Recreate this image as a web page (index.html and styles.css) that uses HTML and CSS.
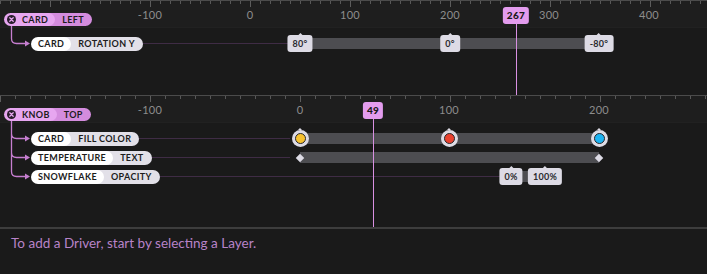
FILE: index.html
```html
<!DOCTYPE html>
<html lang="en">
<head>
    <meta charset="UTF-8">
    <title>Drivers</title>
    <link rel="stylesheet" href="styles.css">
</head>
<body>
    <!-- Driver: Card / Left -->
    <div class="panel panel-card">
        <div class="ruler ruler-wide">
            <div class="chip chip-driver">
                <span class="chip-layer">
                    <svg class="chip-x" width="9" height="9" viewBox="0 0 9 9">
                        <circle cx="4.5" cy="4.5" r="4.5" fill="#2a1d2d"/>
                        <path d="M2.8 2.8 L6.2 6.2 M6.2 2.8 L2.8 6.2" stroke="#e7a6f0" stroke-width="1.3" stroke-linecap="round"/>
                    </svg>
                    CARD
                </span>
                <span class="chip-prop">LEFT</span>
            </div>
            <span class="tick" style="left:150px">-100</span>
            <span class="tick" style="left:250px">0</span>
            <span class="tick" style="left:350px">100</span>
            <span class="tick" style="left:450px">200</span>
            <span class="tick" style="left:549px">300</span>
            <span class="tick" style="left:649px">400</span>
        </div>
        <div class="rows">
            <div class="row">
                <div class="row-line" style="width:250px"></div>
                <div class="chip"><span class="chip-layer">CARD</span><span class="chip-prop">ROTATION Y</span></div>
                <div class="bar" style="left:300px; width:299px"></div>
                <span class="key-label" style="left:300px">80°</span>
                <span class="key-label" style="left:450px">0°</span>
                <span class="key-label" style="left:599px">-80°</span>
            </div>
        </div>
        <svg class="links" width="40" height="94" viewBox="0 0 40 94">
            <path d="M11.5 20 V37.5 Q11.5 42.5 16.5 42.5 H26" fill="none" stroke="#c67ed0" stroke-width="1.3"/>
            <path d="M25 39.5 L30 42.5 L25 45.5 Z" fill="#c67ed0"/>
        </svg>
        <div class="playhead" style="left:516px"><span class="playhead-value">267</span></div>
    </div>

    <!-- Driver: Knob / Top -->
    <div class="panel panel-knob">
        <div class="ruler ruler-narrow">
            <div class="chip chip-driver">
                <span class="chip-layer">
                    <svg class="chip-x" width="9" height="9" viewBox="0 0 9 9">
                        <circle cx="4.5" cy="4.5" r="4.5" fill="#2a1d2d"/>
                        <path d="M2.8 2.8 L6.2 6.2 M6.2 2.8 L2.8 6.2" stroke="#e7a6f0" stroke-width="1.3" stroke-linecap="round"/>
                    </svg>
                    KNOB
                </span>
                <span class="chip-prop">TOP</span>
            </div>
            <span class="tick" style="left:150px">-100</span>
            <span class="tick" style="left:300px">0</span>
            <span class="tick" style="left:449px">100</span>
            <span class="tick" style="left:599px">200</span>
        </div>
        <div class="rows">
            <div class="row">
                <div class="row-line" style="width:250px"></div>
                <div class="chip"><span class="chip-layer">CARD</span><span class="chip-prop">FILL COLOR</span></div>
                <div class="bar" style="left:300px; width:299px"></div>
                <span class="key-dot" style="left:300px"><span class="dot dot-yellow"></span></span>
                <span class="key-dot" style="left:449px"><span class="dot dot-red"></span></span>
                <span class="key-dot" style="left:599px"><span class="dot dot-blue"></span></span>
            </div>
            <div class="row">
                <div class="row-line" style="width:250px"></div>
                <div class="chip"><span class="chip-layer">TEMPERATURE</span><span class="chip-prop">TEXT</span></div>
                <div class="bar" style="left:300px; width:299px"></div>
                <span class="key-diamond" style="left:300px"></span>
                <span class="key-diamond" style="left:599px"></span>
            </div>
            <div class="row">
                <div class="row-line" style="width:461px"></div>
                <div class="chip"><span class="chip-layer">SNOWFLAKE</span><span class="chip-prop">OPACITY</span></div>
                <div class="bar" style="left:511px; width:34px"></div>
                <span class="key-label" style="left:511px">0%</span>
                <span class="key-label" style="left:545px">100%</span>
            </div>
        </div>
        <svg class="links" width="40" height="131" viewBox="0 0 40 131">
            <path d="M11.5 20 V75.5 Q11.5 80.5 16.5 80.5 H26 M11.5 37.5 Q11.5 42.5 16.5 42.5 H26 M11.5 56.5 Q11.5 61.5 16.5 61.5 H26" fill="none" stroke="#c67ed0" stroke-width="1.3"/>
            <path d="M25 39.5 L30 42.5 L25 45.5 Z M25 58.5 L30 61.5 L25 64.5 Z M25 77.5 L30 80.5 L25 83.5 Z" fill="#c67ed0"/>
        </svg>
        <div class="playhead" style="left:373px"><span class="playhead-value">49</span></div>
    </div>

    <div class="footer">To add a Driver, start by selecting a Layer.</div>
</body>
</html>
```

FILE: styles.css
```css
* {
    box-sizing: border-box;
}

body {
    margin: 0;
    width: 707px;
    height: 274px;
    overflow: hidden;
    background-color: #1a1a1a;
    font-family: 'Lato', 'Noto Sans', sans-serif;
}

.panel {
    position: relative;
    border-top: 1px solid #4b4b4b;
    overflow: hidden;
}

.panel-card {
    height: 95px;
}

.panel-knob {
    height: 132px;
}

/* Ruler along the top of each panel */
.ruler {
    position: relative;
    height: 27px;
    padding: 7px 0 0 4px;
    background-color: #1e1e1e;
    border-bottom: 1px solid #212121;
}

.ruler::before {
    content: "";
    position: absolute;
    top: 0;
    left: 0;
    right: 0;
    height: 6px;
}

.ruler-wide::before {
    background:
        repeating-linear-gradient(to right, #5c5c5c 0 1px, transparent 1px 100px) 50px 0 / 100% 6px no-repeat,
        repeating-linear-gradient(to right, #575757 0 1px, transparent 1px 10px) 0 0 / 100% 3px no-repeat;
}

.ruler-narrow::before {
    background:
        repeating-linear-gradient(to right, #5c5c5c 0 1px, transparent 1px 150px) 0 0 / 100% 6px no-repeat,
        repeating-linear-gradient(to right, #575757 0 1px, transparent 1px 15px) 0 0 / 100% 3px no-repeat;
}

.tick {
    position: absolute;
    top: 7px;
    transform: translateX(-50%);
    font-size: 11px;
    line-height: 13px;
    color: #8d8d8d;
    letter-spacing: 0.3px;
}

/* Layer / property chips */
.chip {
    position: relative;
    z-index: 2;
    display: inline-flex;
    height: 14px;
    font-size: 9px;
    font-weight: 700;
    letter-spacing: 0.35px;
    line-height: 14px;
    color: #1c1c1c;
}

.chip-layer {
    position: relative;
    z-index: 1;
    display: flex;
    align-items: center;
    padding: 0 7px;
    border-radius: 7px;
    background-color: #fff;
}

.chip-prop {
    margin-left: -7px;
    padding: 0 8px 0 14px;
    border-radius: 0 7px 7px 0;
    background-color: #e2e0e8;
}

.chip-driver {
    height: 13px;
    line-height: 13px;
}

.chip-driver .chip-layer {
    padding-left: 3px;
    background-color: #e7a6f0;
}

.chip-driver .chip-prop {
    background-color: #d48cde;
}

.chip-x {
    margin-right: 6px;
}

/* Rows */
.rows {
    padding-top: 6px;
}

.row {
    position: relative;
    display: flex;
    align-items: center;
    height: 19px;
    padding-left: 31px;
}

.row-line {
    position: absolute;
    top: 9px;
    left: 40px;
    height: 1px;
    background-color: #3f2c45;
}

.bar {
    position: absolute;
    top: 4px;
    height: 11px;
    background-color: #4d4d51;
}

.key-label {
    position: absolute;
    top: 1px;
    z-index: 2;
    height: 17px;
    padding: 0 5px;
    transform: translateX(-50%);
    border-radius: 3px;
    background-color: #dddbe5;
    font-size: 9px;
    font-weight: 700;
    line-height: 17px;
    letter-spacing: 0.3px;
    color: #2a2a2e;
}

.key-label::before,
.key-dot::before {
    content: "";
    position: absolute;
    top: -2px;
    left: 50%;
    margin-left: -2px;
    border-left: 2px solid transparent;
    border-right: 2px solid transparent;
    border-bottom: 2px solid #dddbe5;
}

.key-dot {
    position: absolute;
    top: 1px;
    z-index: 2;
    width: 17px;
    height: 17px;
    margin-left: -8.5px;
    border-radius: 50%;
    background-color: #dddbe5;
    display: flex;
    align-items: center;
    justify-content: center;
}

.dot {
    width: 11px;
    height: 11px;
    border-radius: 50%;
    border: 1px solid #26262a;
}

.dot-yellow {
    background-color: #f6c130;
}

.dot-red {
    background-color: #ea412f;
}

.dot-blue {
    background-color: #1db3f2;
}

.key-diamond {
    position: absolute;
    top: 6.5px;
    z-index: 2;
    width: 6px;
    height: 6px;
    margin-left: -3px;
    transform: rotate(45deg);
    background-color: #dddbe5;
}

/* Connector arrows from the driver to its rows */
.links {
    position: absolute;
    top: 0;
    left: 0;
    z-index: 1;
}

/* Current value of the driver */
.playhead {
    position: absolute;
    top: 6px;
    bottom: 0;
    z-index: 3;
    width: 1px;
    background-color: #d890e2;
}

.playhead-value {
    position: absolute;
    top: 0;
    left: 0;
    transform: translateX(-50%);
    height: 17px;
    padding: 0 4px;
    border-radius: 3px;
    background-color: #e39cee;
    font-size: 10px;
    font-weight: 900;
    line-height: 17px;
    letter-spacing: 0.3px;
    color: #1a1a1a;
}

.footer {
    border-top: 2px solid #3d3d3d;
    padding: 5px 11px;
    font-size: 13.5px;
    line-height: 18px;
    color: #b883c8;
}
```
